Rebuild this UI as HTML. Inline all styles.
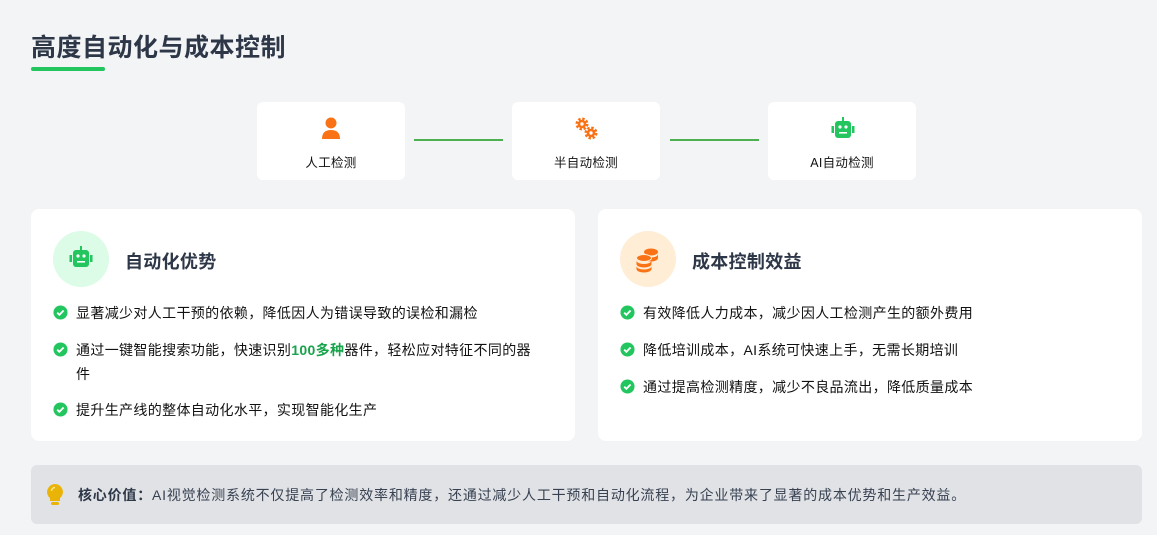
<!DOCTYPE html>
<html><head><meta charset="utf-8"><style>
*{margin:0;padding:0;box-sizing:border-box}
body{width:1157px;height:535px;background:#f3f4f6;font-family:"Liberation Sans","Noto Sans CJK SC",sans-serif;color:#1f2937;position:relative;overflow:hidden}
.abs{position:absolute}
h1{position:absolute;left:31px;top:28px;font-size:25px;font-weight:bold;color:#2d3748;letter-spacing:0.5px}
.ul{left:31px;top:67px;width:74px;height:4px;background:#22c55e;border-radius:2px}
.step{top:102px;width:148px;height:78px;background:#fff;border-radius:6px;text-align:center;font-size:12.5px;color:#111;letter-spacing:0.3px}
.step svg{position:absolute;left:62px;top:14px}
.step span{position:absolute;left:0;right:0;top:50px}
.line{top:139px;width:89px;height:2px;background:#4caf50}
.card{top:209px;width:544px;height:232px;background:#fff;border-radius:8px}
.circ{left:22px;top:22px;width:56px;height:56px;border-radius:50%}
.ct{left:94px;top:39px;font-size:18px;font-weight:bold;color:#2d3748;letter-spacing:0.3px}
.li{left:22px;font-size:14px;line-height:24px;color:#111;padding-left:23px;width:480px;letter-spacing:0.35px}
.li svg{position:absolute;left:0;top:4px}
.box{left:31px;top:465px;width:1111px;height:59px;background:#e1e2e6;border-radius:6px;font-size:14px;color:#374151;letter-spacing:0.8px}
</style></head><body>
<h1>高度自动化与成本控制</h1>
<div class="abs ul"></div>

<div class="abs step" style="left:257px"><svg width="24" height="26" viewBox="0 0 24 26"><circle cx="12" cy="7" r="5.5" fill="#f97316"/><path d="M3 23 Q3 14 12 14 Q21 14 21 23 Z" fill="#f97316"/></svg><span>人工检测</span></div>
<div class="abs line" style="left:414px"></div>
<div class="abs step" style="left:512px"><svg width="26" height="26" viewBox="0 0 26 26"><circle cx="8" cy="8" r="5.2" fill="none" stroke="#f97316" stroke-width="2.6" stroke-dasharray="2.4 1.7"/><circle cx="8" cy="8" r="4.3" fill="#f97316"/><circle cx="8" cy="8" r="1.7" fill="#fff"/><circle cx="17" cy="17" r="5.2" fill="none" stroke="#f97316" stroke-width="2.6" stroke-dasharray="2.4 1.7"/><circle cx="17" cy="17" r="4.3" fill="#f97316"/><circle cx="17" cy="17" r="1.7" fill="#fff"/></svg><span>半自动检测</span></div>
<div class="abs line" style="left:670px"></div>
<div class="abs step" style="left:768px"><svg width="26" height="26" viewBox="0 0 26 26"><rect x="12" y="1" width="2" height="5" fill="#22c55e"/><rect x="5" y="5" width="16" height="17" rx="3" fill="#22c55e"/><rect x="1.5" y="10" width="2.5" height="7" fill="#22c55e"/><rect x="22" y="10" width="2.5" height="7" fill="#22c55e"/><circle cx="10" cy="11" r="1.6" fill="#fff"/><circle cx="16" cy="11" r="1.6" fill="#fff"/><rect x="9" y="16" width="8" height="1.6" fill="#fff"/></svg><span>AI自动检测</span></div>

<div class="abs card" style="left:31px">
 <div class="abs circ" style="background:#dcfce7"><svg style="position:absolute;left:15px;top:14px" width="26" height="26" viewBox="0 0 26 26"><rect x="12" y="1" width="2" height="5" fill="#22c55e"/><rect x="5" y="5" width="16" height="17" rx="3" fill="#22c55e"/><rect x="1.5" y="10" width="2.5" height="7" fill="#22c55e"/><rect x="22" y="10" width="2.5" height="7" fill="#22c55e"/><circle cx="10" cy="11" r="1.6" fill="#fff"/><circle cx="16" cy="11" r="1.6" fill="#fff"/><rect x="9" y="16" width="8" height="1.6" fill="#fff"/></svg></div>
 <div class="abs ct">自动化优势</div>
 <div class="abs li" style="top:92px"><svg width="15" height="15" viewBox="0 0 16 16"><circle cx="8" cy="8" r="7.5" fill="#22c55e"/><path d="M4.5 8.2l2.3 2.3 4.5-4.6" stroke="#fff" stroke-width="2" fill="none"/></svg>显著减少对人工干预的依赖，降低因人为错误导致的误检和漏检</div>
 <div class="abs li" style="top:129px"><svg width="15" height="15" viewBox="0 0 16 16"><circle cx="8" cy="8" r="7.5" fill="#22c55e"/><path d="M4.5 8.2l2.3 2.3 4.5-4.6" stroke="#fff" stroke-width="2" fill="none"/></svg>通过一键智能搜索功能，快速识别<b style="color:#16a34a">100多种</b>器件，轻松应对特征不同的器<br>件</div>
 <div class="abs li" style="top:189px"><svg width="15" height="15" viewBox="0 0 16 16"><circle cx="8" cy="8" r="7.5" fill="#22c55e"/><path d="M4.5 8.2l2.3 2.3 4.5-4.6" stroke="#fff" stroke-width="2" fill="none"/></svg>提升生产线的整体自动化水平，实现智能化生产</div>
</div>

<div class="abs card" style="left:598px">
 <div class="abs circ" style="background:#ffedd5"><svg style="position:absolute;left:14px;top:14px" width="28" height="28" viewBox="0 0 28 28"><ellipse cx="17" cy="7" rx="7" ry="3.5" fill="#f97316"/><path d="M10 9v4c0 2 3 3.5 7 3.5s7-1.5 7-3.5V9c0 2-3 3.5-7 3.5S10 11 10 9z" fill="#f97316"/><ellipse cx="10" cy="13" rx="7.5" ry="3.5" fill="#f97316" stroke="#ffedd5" stroke-width="1"/><path d="M2.5 15.5v3.5c0 2 3.4 3.5 7.5 3.5s7.5-1.5 7.5-3.5v-3.5c0 2-3.4 3.5-7.5 3.5S2.5 17.5 2.5 15.5zM2.5 21v3c0 2 3.4 3.5 7.5 3.5s7.5-1.5 7.5-3.5v-3c0 2-3.4 3.5-7.5 3.5S2.5 23 2.5 21z" fill="#f97316"/></svg></div>
 <div class="abs ct">成本控制效益</div>
 <div class="abs li" style="top:92px"><svg width="15" height="15" viewBox="0 0 16 16"><circle cx="8" cy="8" r="7.5" fill="#22c55e"/><path d="M4.5 8.2l2.3 2.3 4.5-4.6" stroke="#fff" stroke-width="2" fill="none"/></svg>有效降低人力成本，减少因人工检测产生的额外费用</div>
 <div class="abs li" style="top:129px"><svg width="15" height="15" viewBox="0 0 16 16"><circle cx="8" cy="8" r="7.5" fill="#22c55e"/><path d="M4.5 8.2l2.3 2.3 4.5-4.6" stroke="#fff" stroke-width="2" fill="none"/></svg>降低培训成本，AI系统可快速上手，无需长期培训</div>
 <div class="abs li" style="top:166px"><svg width="15" height="15" viewBox="0 0 16 16"><circle cx="8" cy="8" r="7.5" fill="#22c55e"/><path d="M4.5 8.2l2.3 2.3 4.5-4.6" stroke="#fff" stroke-width="2" fill="none"/></svg>通过提高检测精度，减少不良品流出，降低质量成本</div>
</div>

<div class="abs box">
 <svg style="position:absolute;left:15px;top:18px" width="18" height="24" viewBox="0 0 18 24"><path d="M9 1a8 8 0 0 0-5 14.2V18h10v-2.8A8 8 0 0 0 9 1z" fill="#eab308"/><rect x="5" y="19" width="8" height="3" rx="1.5" fill="#eab308"/><path d="M5.5 8a3.5 3.5 0 0 1 3.5-3.5" stroke="#fde68a" stroke-width="1.4" fill="none"/></svg>
 <div class="abs" style="left:47px;top:20px;white-space:nowrap"><b style="color:#2d3748">核心价值：</b>AI视觉检测系统不仅提高了检测效率和精度，还通过减少人工干预和自动化流程，为企业带来了显著的成本优势和生产效益。</div>
</div>
</body></html>
